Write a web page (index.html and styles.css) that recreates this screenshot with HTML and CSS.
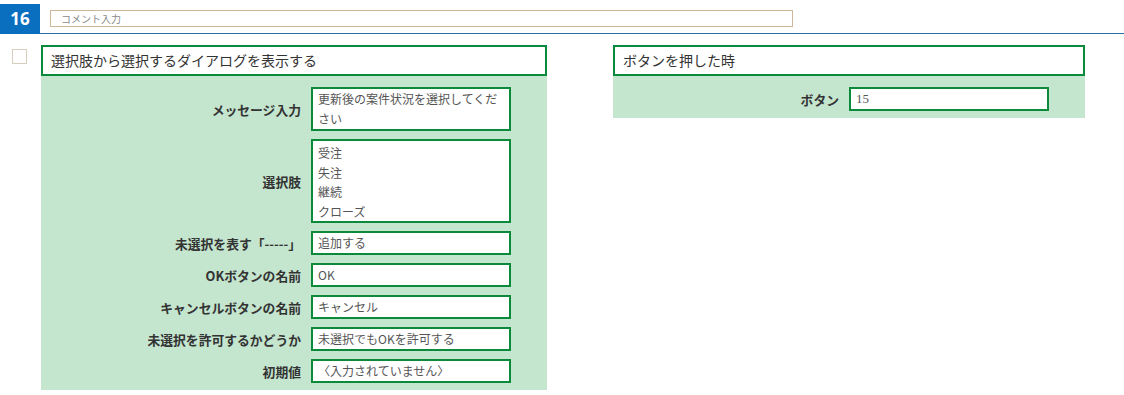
FILE: index.html
```html
<!DOCTYPE html>
<html lang="ja">
<head>
    <meta charset="UTF-8">
    <meta name="viewport" content="width=device-width, initial-scale=1.0">
    <title>ステップ 16</title>
    <link rel="stylesheet" href="styles.css">
</head>
<body>
    <div class="topbar">
        <div class="step-no">16</div>
        <div class="comment-area">
            <div class="comment-input">コメント入力</div>
        </div>
    </div>
    <div class="main">
        <div class="check"></div>
        <div class="panel panel-left">
            <div class="panel-title">選択肢から選択するダイアログを表示する</div>
            <div class="panel-body">
                <div class="row">
                    <div class="label">メッセージ入力</div>
                    <div class="field field-multi">更新後の案件状況を選択してください</div>
                </div>
                <div class="row">
                    <div class="label">選択肢</div>
                    <div class="field field-list">
                        <div>受注</div>
                        <div>失注</div>
                        <div>継続</div>
                        <div>クローズ</div>
                    </div>
                </div>
                <div class="row">
                    <div class="label">未選択を表す「-----」</div>
                    <div class="field">追加する</div>
                </div>
                <div class="row">
                    <div class="label">OKボタンの名前</div>
                    <div class="field">OK</div>
                </div>
                <div class="row">
                    <div class="label">キャンセルボタンの名前</div>
                    <div class="field">キャンセル</div>
                </div>
                <div class="row">
                    <div class="label">未選択を許可するかどうか</div>
                    <div class="field">未選択でもOKを許可する</div>
                </div>
                <div class="row">
                    <div class="label">初期値</div>
                    <div class="field">〈入力されていません〉</div>
                </div>
            </div>
        </div>
        <div class="panel panel-right">
            <div class="panel-title">ボタンを押した時</div>
            <div class="panel-body">
                <div class="row">
                    <div class="label">ボタン</div>
                    <div class="field field-num">15</div>
                </div>
            </div>
        </div>
    </div>
</body>
</html>
```

FILE: styles.css
```css
body {
    margin: 0;
    font-family: 'Noto Sans CJK JP', 'Noto Sans', sans-serif;
    background-color: #fff;
    color: #333;
}

.topbar {
    display: flex;
    align-items: flex-start;
    padding-top: 4px;
}

.step-no {
    width: 40px;
    height: 30px;
    background-color: #0b6fbf;
    color: #fff;
    font-family: 'Open Sans', 'Noto Sans', sans-serif;
    font-weight: bold;
    font-size: 17px;
    line-height: 30px;
    text-align: center;
}

.comment-area {
    flex: 1;
    height: 29px;
    border-bottom: 1px solid #2b6ea5;
}

.comment-input {
    margin: 6px 0 0 10px;
    width: 731px;
    height: 15px;
    padding-left: 10px;
    border: 1px solid #cdb89c;
    font-size: 10px;
    line-height: 15px;
    color: #8a8a8a;
}

.main {
    display: flex;
    align-items: flex-start;
    padding-top: 11px;
}

.check {
    width: 13px;
    height: 13px;
    margin: 4px 0 0 12px;
    border: 1px solid #d8ccbd;
}

.panel {
    display: flex;
    flex-direction: column;
}

.panel-left {
    width: 506px;
    margin-left: 14px;
}

.panel-right {
    width: 472px;
    margin-left: 66px;
}

.panel-title {
    height: 27px;
    border: 2px solid #0b8a3b;
    padding-left: 8px;
    font-size: 14px;
    line-height: 27px;
    color: #333;
    background-color: #fff;
}

.panel-body {
    display: flex;
    flex-direction: column;
    gap: 8px;
    padding: 11px 0 7px;
    background-color: #c4e5ce;
}

.row {
    display: flex;
    align-items: center;
}

.label {
    width: 270px;
    padding-right: 10px;
    box-sizing: border-box;
    text-align: right;
    font-size: 12.8px;
    font-weight: bold;
    color: #333;
}

.panel-right .label {
    width: 236px;
}

.field {
    width: 200px;
    height: 24px;
    box-sizing: border-box;
    border: 2px solid #0b8a3b;
    background-color: #fff;
    padding: 0 5px;
    font-size: 12px;
    line-height: 20px;
    color: #555;
}

.field-multi {
    height: 44px;
}

.field-list {
    height: 84px;
    padding-top: 2px;
    line-height: 19.7px;
}

.field-num {
    font-family: 'Liberation Serif', serif;
    font-size: 13px;
}
```
